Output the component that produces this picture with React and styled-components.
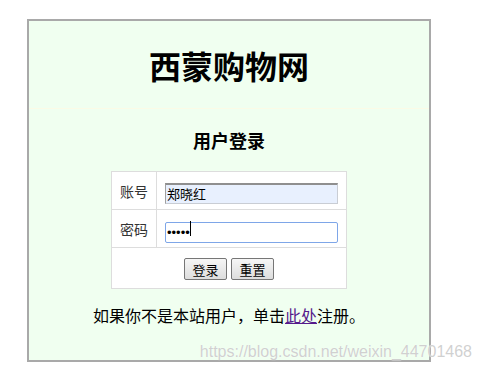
import React from "react";
import styled, { createGlobalStyle } from "styled-components";

const Global = createGlobalStyle`
  html, body { margin: 0; padding: 0; background: #fff; }
  body { font-family: "Noto Sans CJK SC", "Liberation Sans", sans-serif; color: #000; }
`;

const Page = styled.div`
  position: relative;
  width: 481px;
  height: 371px;
  padding: 19px 0 0 27px;
  box-sizing: border-box;
`;

const Box = styled.div`
  width: 400px;
  height: 339px;
  border: 2px solid #a9a9a9;
  background: #f0fff0;
  display: flex;
  flex-direction: column;
  align-items: center;
`;

const Header = styled.div`
  align-self: stretch;
  height: 87px;
  border-bottom: 1px solid #fbfbe6;
  display: flex;
  align-items: center;
  justify-content: center;
`;

const Title = styled.h1`
  margin: 0;
  font-size: 32px;
  font-weight: 700;
  line-height: 1;
`;

const SubTitle = styled.h3`
  margin: 19px 0 0;
  font-size: 18px;
  font-weight: 700;
  line-height: 24px;
`;

const Table = styled.table`
  margin-top: 19px;
  width: 236px;
  border-collapse: collapse;
  border: 1px solid #dddddd;
  background: #fff;
`;

const Row = styled.tr`
  height: ${(p) => p.$h}px;
`;

const Label = styled.td`
  width: 44px;
  border: 1px solid #dddddd;
  text-align: center;
  font-size: 14px;
  color: #333;
  padding: 0;
`;

const Field = styled.td`
  border: 1px solid #dddddd;
  padding: 0 0 0 8px;
`;

const Actions = styled.td`
  border: 1px solid #dddddd;
  text-align: center;
  padding: 0;
`;

const InputWrap = styled.div`
  position: relative;
  width: 173px;
  height: 21px;
`;

const Input = styled.input`
  box-sizing: border-box;
  width: 173px;
  height: 21px;
  margin: 0;
  padding: 0 1px;
  font-family: ${(p) =>
    p.type === "password"
      ? '"Liberation Sans", Arial, sans-serif'
      : '"Noto Sans CJK SC", sans-serif'};
  font-size: 13px;
  letter-spacing: 0;
  color: #000;
  outline: none;
  background: ${(p) => (p.$filled ? "#e8f0fe" : "#fff")};
  border: 1px solid ${(p) => (p.$focus ? "#7ea6e8" : "#c9cdd4")};
  border-top: ${(p) => (p.$focus ? "1px solid #7ea6e8" : "2px solid #8f8f8f")};
  border-left: ${(p) => (p.$focus ? "1px solid #7ea6e8" : "1px solid #a0a0a0")};
  border-radius: ${(p) => (p.$focus ? "2px" : "0")};
`;

const Caret = styled.span`
  position: absolute;
  left: 25px;
  top: 3px;
  width: 1px;
  height: 15px;
  background: #000;
`;

const Button = styled.button`
  height: 22px;
  width: 43px;
  margin: 0 2px;
  padding: 0;
  font-family: "Noto Sans CJK SC", sans-serif;
  font-size: 13px;
  color: #000;
  border: 1px solid #767676;
  border-radius: 2px;
  background: linear-gradient(#f6f6f6, #dddddd);
`;

const Note = styled.p`
  margin: 15px 0 0;
  font-size: 16px;
  line-height: 22px;
`;

const Link = styled.a`
  color: #551a8b;
  text-decoration: underline;
`;

const Watermark = styled.div`
  position: absolute;
  right: 9px;
  top: 343px;
  font-family: "Liberation Sans", Arial, sans-serif;
  font-size: 16px;
  color: rgba(200, 200, 200, 0.85);
  text-shadow: 0 0 1px #fff;
  white-space: nowrap;
`;

export default function App() {
  return (
    <Page>
      <Global />
      <Box>
        <Header>
          <Title>西蒙购物网</Title>
        </Header>
        <SubTitle>用户登录</SubTitle>
        <Table>
          <tbody>
            <Row $h={38}>
              <Label>账号</Label>
              <Field>
                <InputWrap>
                  <Input $filled type="text" defaultValue="郑晓红" readOnly />
                </InputWrap>
              </Field>
            </Row>
            <Row $h={38}>
              <Label>密码</Label>
              <Field>
                <InputWrap>
                  <Input $focus type="password" defaultValue="12345" readOnly />
                  <Caret />
                </InputWrap>
              </Field>
            </Row>
            <Row $h={41}>
              <Actions colSpan={2}>
                <Button>登录</Button>
                <Button>重置</Button>
              </Actions>
            </Row>
          </tbody>
        </Table>
        <Note>
          如果你不是本站用户，单击<Link href="#">此处</Link>注册。
        </Note>
      </Box>
      <Watermark>https://blog.csdn.net/weixin_44701468</Watermark>
    </Page>
  );
}
